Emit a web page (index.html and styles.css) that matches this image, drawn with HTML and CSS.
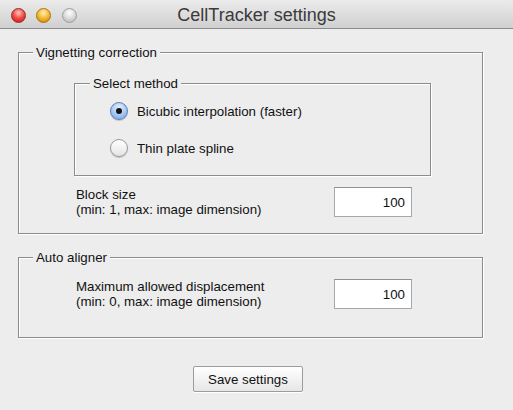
FILE: index.html
```html
<!DOCTYPE html>
<html lang="en">
<head>
    <meta charset="UTF-8">
    <title>CellTracker settings</title>
    <link rel="stylesheet" href="styles.css">
</head>
<body>
    <div class="window">
        <div class="titlebar">
            <div class="lights">
                <span class="light red"></span>
                <span class="light yellow"></span>
                <span class="light gray"></span>
            </div>
            <div class="title">CellTracker settings</div>
            <div></div>
        </div>

        <div class="content">
            <fieldset class="group outer">
                <legend>Vignetting correction</legend>
                <div class="group-body">
                    <fieldset class="group inner">
                        <legend>Select method</legend>
                        <div class="options">
                            <label class="option"><span class="radio checked"></span>Bicubic interpolation (faster)</label>
                            <label class="option"><span class="radio"></span>Thin plate spline</label>
                        </div>
                    </fieldset>
                    <div class="field first">
                        <div class="field-label">Block size<br>(min: 1, max: image dimension)</div>
                        <input class="num" type="text" value="100">
                    </div>
                </div>
            </fieldset>

            <fieldset class="group outer second">
                <legend>Auto aligner</legend>
                <div class="group-body tall">
                    <div class="field">
                        <div class="field-label">Maximum allowed displacement<br>(min: 0, max: image dimension)</div>
                        <input class="num" type="text" value="100">
                    </div>
                </div>
            </fieldset>

            <button class="save">Save settings</button>
        </div>
    </div>
</body>
</html>
```

FILE: styles.css
```css
body {
    margin: 0;
    background: #ededed;
    font-family: 'Liberation Sans', Arial, sans-serif;
    font-size: 13.3px;
    color: #111;
}

.window {
    width: 513px;
    height: 410px;
    background: #ededed;
}

.titlebar {
    height: 28px;
    border-bottom: 1px solid #8a8a8a;
    background: linear-gradient(#ebebeb, #d0d0d0);
    display: grid;
    grid-template-columns: 1fr auto 1fr;
    align-items: center;
}

.lights {
    display: flex;
    gap: 10.5px;
    padding: 2px 0 0 10.5px;
}

.light {
    width: 15px;
    height: 15px;
    border-radius: 50%;
    box-sizing: border-box;
}

.light.red {
    background: radial-gradient(circle at 50% 30%, #ffc2bc, #ee4a42 50%, #b8150f);
    border: 1px solid #9c2a24;
}

.light.yellow {
    background: radial-gradient(circle at 50% 30%, #fff0b8, #f5b82c 50%, #c47a08);
    border: 1px solid #a8731a;
}

.light.gray {
    background: radial-gradient(circle at 50% 30%, #ffffff, #dadada 50%, #b2b2b2);
    border: 1px solid #9e9e9e;
}

.title {
    font-size: 18px;
    color: #3a3a3a;
    padding-top: 2px;
}

.content {
    padding: 16px 0 0 18px;
}

fieldset.group {
    margin: 0;
    padding: 0;
    min-width: 0;
    border: 1px solid #8c8c8c;
    box-shadow: inset 1px 1px 0 #fff, 1px 1px 0 #fff;
}

fieldset.group legend {
    padding: 0 3px;
    margin-left: 14px;
    line-height: 15px;
    background: #ededed;
}

.outer {
    width: 465px;
    box-sizing: border-box;
}

.outer.second {
    margin-top: 16px;
}

.group-body {
    padding: 0 0 16px 55px;
}

.group-body.tall {
    padding-bottom: 28px;
}

.inner {
    width: 357px;
    box-sizing: border-box;
    margin-top: 16px !important;
}

.inner legend {
    margin-left: 15px !important;
}

.options {
    display: flex;
    flex-direction: column;
    gap: 15px;
    padding: 9px 0 16px 35px;
}

.option {
    display: flex;
    align-items: center;
    height: 22px;
}

.radio {
    width: 18px;
    height: 18px;
    border-radius: 50%;
    box-sizing: border-box;
    margin-right: 9px;
    border: 1px solid #9a9a9a;
    background: linear-gradient(#ffffff, #e4e4e4);
    box-shadow: 0 1px 1px rgba(0, 0, 0, 0.2);
    display: flex;
    align-items: center;
    justify-content: center;
}

.radio.checked {
    border-color: #5d80b8;
    background: radial-gradient(circle at 50% 30%, #e6f0fc, #9cc2f2 60%, #6f9fe0);
}

.radio.checked::after {
    content: "";
    width: 6px;
    height: 6px;
    border-radius: 50%;
    background: #111;
}

.field {
    display: grid;
    grid-template-columns: 258px 78px;
    align-items: center;
    margin-top: 14px;
    padding-left: 2px;
}

.field.first {
    margin-top: 11px;
}

.field-label {
    line-height: 15px;
}

.num {
    width: 78px;
    height: 30px;
    box-sizing: border-box;
    margin: 0;
    border: 1px solid #a8a8a8;
    border-top-color: #909090;
    background: #fff;
    text-align: right;
    padding: 0 6px 0 0;
    font-family: 'Liberation Sans', Arial, sans-serif;
    font-size: 13.3px;
    color: #111;
}

.save {
    display: block;
    margin: 28px 0 0 175px;
    width: 110px;
    height: 26px;
    border: 1px solid #9c9c9c;
    border-radius: 2px;
    background: linear-gradient(#ffffff, #e6e6e6);
    box-shadow: 0 1px 0 #fff;
    font-family: 'Liberation Sans', Arial, sans-serif;
    font-size: 13.3px;
    color: #111;
    padding: 0;
}
```
